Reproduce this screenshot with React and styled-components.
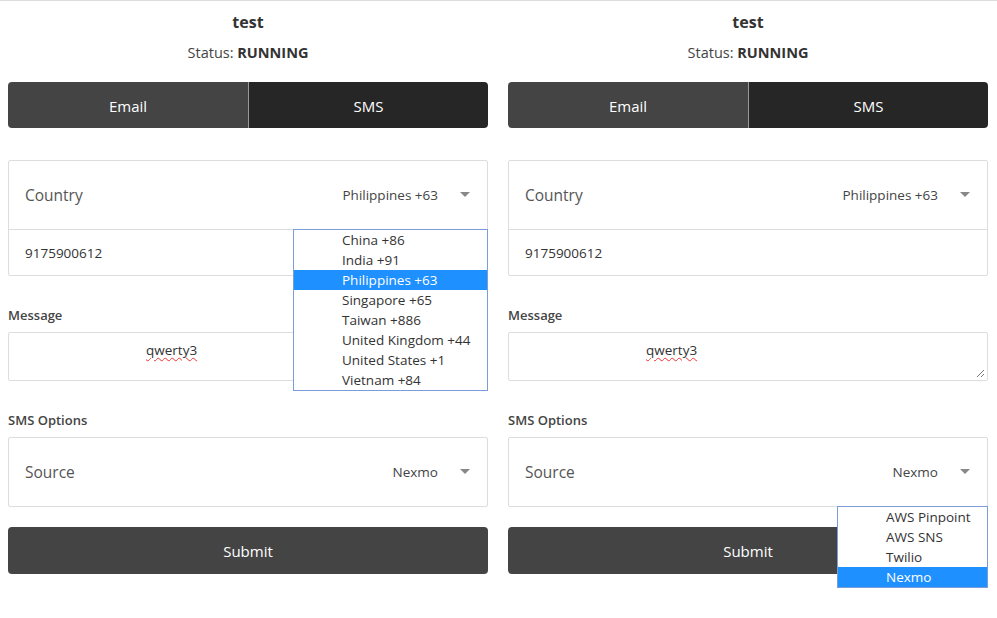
import React from 'react';
import styled, { createGlobalStyle } from 'styled-components';

const GlobalStyle = createGlobalStyle`
  html, body {
    margin: 0;
    padding: 0;
    background: #fff;
  }
  body {
    font-family: "Open Sans", "Noto Sans", sans-serif;
    color: #333;
    border-top: 1px solid #ddd;
  }
`;

const Page = styled.div`
  display: grid;
  grid-template-columns: 480px 480px;
  column-gap: 20px;
  padding: 0 8px 60px;
  min-height: 617px;
  box-sizing: border-box;
`;

const Panel = styled.div`
  display: flex;
  flex-direction: column;
`;

const Title = styled.div`
  text-align: center;
  font-weight: 700;
  font-size: 16px;
  color: #333;
  margin-top: 10px;
  line-height: 22px;
`;

const Status = styled.div`
  text-align: center;
  font-size: 14.5px;
  color: #444;
  margin-top: 10px;
  line-height: 20px;
  b {
    font-weight: 700;
    color: #333;
  }
`;

const Tabs = styled.div`
  display: grid;
  grid-template-columns: 1fr 1fr;
  margin-top: 19px;
  height: 46px;
  border-radius: 4px;
  overflow: hidden;
`;

const Tab = styled.div`
  display: flex;
  align-items: center;
  justify-content: center;
  padding-top: 1px;
  color: #fff;
  font-size: 15px;
  background: ${(p) => (p.active ? '#444' : '#262626')};
  border-left: ${(p) => (p.active ? 'none' : '1px solid #999')};
`;

const Card = styled.div`
  border: 1px solid #ddd;
  border-radius: 2px;
  margin-top: ${(p) => p.mt || 0}px;
`;

const SelectRow = styled.div`
  position: relative;
  display: flex;
  align-items: center;
  height: 68px;
  padding: 0 17px 0 16px;
`;

const RowLabel = styled.div`
  flex: 1;
  font-size: 15.5px;
  color: #555;
`;

const RowValue = styled.div`
  font-size: 13.5px;
  color: #444;
  margin-right: 22px;
`;

const Caret = styled.span`
  width: 0;
  height: 0;
  border-left: 5px solid transparent;
  border-right: 5px solid transparent;
  border-top: 5px solid #888;
  margin-top: -2px;
`;

const PhoneRow = styled.div`
  display: flex;
  align-items: center;
  height: 45px;
  padding: 0 16px;
  border-top: 1px solid #ddd;
  font-size: 13.5px;
  color: #333;
`;

const FieldLabel = styled.div`
  font-size: 13px;
  font-weight: 600;
  color: #444;
  margin-top: ${(p) => p.mt}px;
  line-height: 18px;
`;

const TextArea = styled.div`
  position: relative;
  margin-top: 8px;
  border: 1px solid #ddd;
  border-radius: 2px;
  padding: 8px 0 0 137px;
  font-size: 13.5px;
  color: #333;
  line-height: 18px;
  box-sizing: border-box;
  height: 49px;
`;

const Spelled = styled.span`
  text-decoration: underline wavy #e33;
  text-decoration-thickness: 1px;
  text-underline-offset: 2px;
`;

const Grip = styled.svg`
  position: absolute;
  right: 2px;
  bottom: 2px;
`;

const Submit = styled.div`
  display: flex;
  align-items: center;
  justify-content: center;
  padding-top: 1px;
  box-sizing: border-box;
  height: 47px;
  margin-top: 20px;
  background: #444;
  border-radius: 4px;
  color: #fff;
  font-size: 15px;
`;

const Dropdown = styled.ul`
  position: absolute;
  top: 100%;
  right: -1px;
  width: ${(p) => p.w}px;
  box-sizing: border-box;
  margin: 0;
  padding: 0;
  list-style: none;
  background: #fff;
  border: 1px solid #7a9cd8;
  z-index: 5;
`;

const Option = styled.li`
  height: 20px;
  line-height: 20px;
  padding-left: 48px;
  font-size: 13.5px;
  color: ${(p) => (p.selected ? '#fff' : '#333')};
  background: ${(p) => (p.selected ? '#1e90ff' : '#fff')};
  white-space: nowrap;
`;

const countries = [
  'China +86',
  'India +91',
  'Philippines +63',
  'Singapore +65',
  'Taiwan +886',
  'United Kingdom +44',
  'United States +1',
  'Vietnam +84',
];

const sources = ['AWS Pinpoint', 'AWS SNS', 'Twilio', 'Nexmo'];

function SmsPanel({ countryOpen, sourceOpen, resizable }) {
  return (
    <Panel>
      <Title>test</Title>
      <Status>
        Status: <b>RUNNING</b>
      </Status>
      <Tabs>
        <Tab active>Email</Tab>
        <Tab>SMS</Tab>
      </Tabs>

      <Card mt={32}>
        <SelectRow>
          <RowLabel>Country</RowLabel>
          <RowValue>Philippines +63</RowValue>
          <Caret />
          {countryOpen && (
            <Dropdown w={195}>
              {countries.map((c) => (
                <Option key={c} selected={c === 'Philippines +63'}>
                  {c}
                </Option>
              ))}
            </Dropdown>
          )}
        </SelectRow>
        <PhoneRow>9175900612</PhoneRow>
      </Card>

      <FieldLabel mt={30}>Message</FieldLabel>
      <TextArea>
        <Spelled>qwerty3</Spelled>
        {resizable && (
          <Grip width="9" height="9" viewBox="0 0 9 9">
            <path d="M1 8 L8 1 M5 8 L8 5" stroke="#777" strokeWidth="1" />
          </Grip>
        )}
      </TextArea>

      <FieldLabel mt={30}>SMS Options</FieldLabel>
      <Card mt={8}>
        <SelectRow>
          <RowLabel>Source</RowLabel>
          <RowValue>Nexmo</RowValue>
          <Caret />
          {sourceOpen && (
            <Dropdown w={151}>
              {sources.map((s) => (
                <Option key={s} selected={s === 'Nexmo'}>
                  {s}
                </Option>
              ))}
            </Dropdown>
          )}
        </SelectRow>
      </Card>

      <Submit>Submit</Submit>
    </Panel>
  );
}

export default function App() {
  return (
    <>
      <GlobalStyle />
      <Page>
        <SmsPanel countryOpen />
        <SmsPanel sourceOpen resizable />
      </Page>
    </>
  );
}
